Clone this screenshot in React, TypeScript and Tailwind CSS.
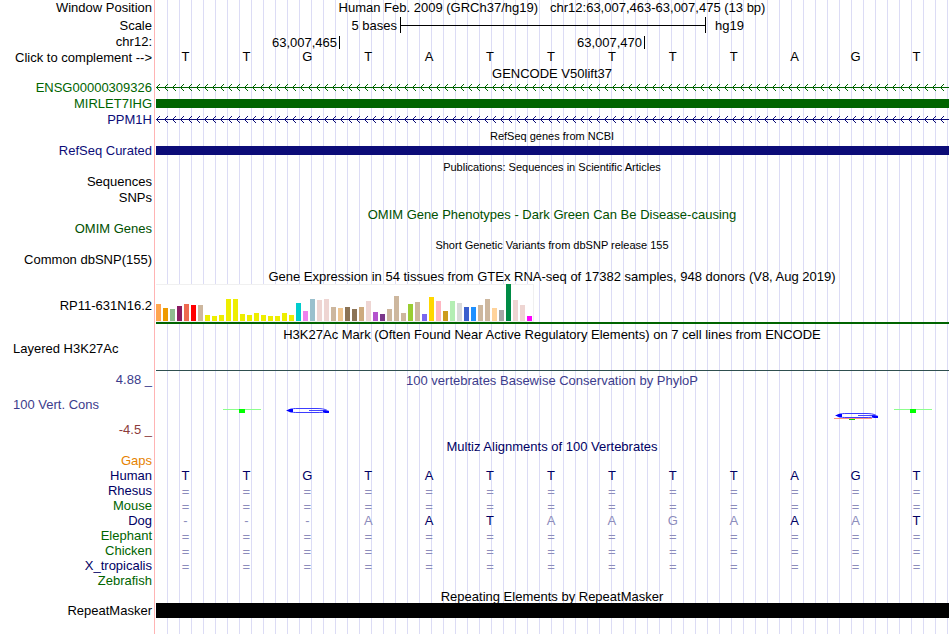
import React from "react";

const NAVY = "#0c0c78";

interface RowProps {
  label?: React.ReactNode;
  labelClass?: string;
  height?: string;
  children?: React.ReactNode;
}

const Row: React.FC<RowProps> = ({
  label,
  labelClass = "justify-end items-center pb-px",
  height = "h-4",
  children,
}) => (
  <div className={`flex ${height}`}>
    <div className={`flex w-[155px] shrink-0 pl-[13px] pr-[3px] ${labelClass}`}>
      {label}
    </div>
    <div className="min-w-0 flex-1">{children}</div>
  </div>
);

const Title: React.FC<{ text: string; className?: string; height?: string }> = ({
  text,
  className = "",
  height = "h-[15px] pt-[2px]",
}) => (
  <Row height={height}>
    <h2 className={`flex h-full items-center justify-center whitespace-pre ${className}`}>
      {text}
    </h2>
  </Row>
);

const Bar: React.FC<{ className: string }> = ({ className }) => (
  <div className="h-full pl-px pt-[3px]">
    <div className={`h-[9px] ${className}`} />
  </div>
);

// Intron line, arrows point to the reverse strand
const Intron: React.FC<{ id: string; color: string }> = ({ id, color }) => (
  <div className="h-full pl-px">
    <svg className="block h-4 w-full" shapeRendering="crispEdges">
      <defs>
        <pattern id={id} width="8" height="16" patternUnits="userSpaceOnUse">
          <path
            d="M0 7h8v1H0zM1 6h1v1H1zM2 5h1v1H2zM3 4h1v1H3zM1 8h1v1H1zM2 9h1v1H2zM3 10h1v1H3z"
            fill={color}
          />
        </pattern>
      </defs>
      <rect width="100%" height="16" fill={`url(#${id})`} />
    </svg>
  </div>
);

const Bases: React.FC<{ seq: string; className?: string; faded?: string }> = ({
  seq,
  className = "",
  faded = "",
}) => (
  <div className={`grid h-full grid-cols-13 items-center pr-[2px] text-center ${className}`}>
    {seq.split("").map((base, i) => (
      <span
        key={i}
        className={`${faded[i] === "x" ? "text-[#8c8cbc]" : ""} ${base === "=" ? "pt-[2px]" : ""}`}
      >
        {base}
      </span>
    ))}
  </div>
);

const tissues: [string, number][] = [
  ["#ffa54f", 17], ["#ee9a00", 13], ["#8fbc8f", 12], ["#8b1c62", 15],
  ["#ee6a50", 17], ["#ff0000", 16], ["#cdb79e", 16], ["#eeee00", 6],
  ["#eeee00", 5], ["#eeee00", 6], ["#eeee00", 22], ["#eeee00", 22],
  ["#eeee00", 7], ["#eeee00", 6], ["#eeee00", 8], ["#eeee00", 6],
  ["#eeee00", 5], ["#eeee00", 5], ["#eeee00", 8], ["#eeee00", 6],
  ["#00cdcd", 18], ["#ee82ee", 10], ["#9ac0cd", 22], ["#eed5d2", 21],
  ["#eed5d2", 22], ["#cdb79e", 14], ["#eec591", 13], ["#8b7355", 14],
  ["#8b7355", 12], ["#cdaa7d", 14], ["#eed5d2", 20], ["#b452cd", 9],
  ["#7a378b", 7], ["#cdb79e", 12], ["#cdb79e", 25], ["#cdb79e", 8],
  ["#9acd32", 17], ["#cdb79e", 19], ["#7a67ee", 7], ["#ffd700", 24],
  ["#ffb6c1", 20], ["#cd9b1d", 10], ["#b4eeb4", 20], ["#d9d9d9", 18],
  ["#3a5fcd", 14], ["#1e90ff", 14], ["#cdb79e", 16], ["#cdb79e", 22],
  ["#ffd39b", 13], ["#a6a6a6", 11], ["#008b45", 37], ["#eed5d2", 21],
  ["#eed5d2", 16], ["#ff00ff", 5],
];

const species = [
  { name: "Human", color: "text-[#000064]", seq: "TTGTATTTTTAGT", faded: "" },
  { name: "Rhesus", color: "text-[#000064]", seq: "=============", faded: "xxxxxxxxxxxxx" },
  { name: "Mouse", color: "text-[#006400]", seq: "=============", faded: "xxxxxxxxxxxxx" },
  { name: "Dog", color: "text-[#000064]", seq: "---AATAAGAAAT", faded: "xxxx..xxxx.x." },
  { name: "Elephant", color: "text-[#006400]", seq: "=============", faded: "xxxxxxxxxxxxx" },
  { name: "Chicken", color: "text-[#006400]", seq: "=============", faded: "xxxxxxxxxxxxx" },
  { name: "X_tropicalis", color: "text-[#000064]", seq: "=============", faded: "xxxxxxxxxxxxx" },
  { name: "Zebrafish", color: "text-[#006400]", seq: "", faded: "" },
];

const LogoT: React.FC = () => (
  <svg className="h-6 w-full" viewBox="0 0 61 24" shapeRendering="crispEdges">
    <path d="M7 9h38v1H7z" fill="#8cff8c" />
    <path d="M23 9h6v4h-6z" fill="#00ff00" />
  </svg>
);

const LogoG: React.FC<{ low?: boolean }> = ({ low }) => (
  <svg className="h-6 w-full" viewBox="0 0 61 24">
    <g transform={low ? "translate(0 5)" : undefined}>
      {low && <path d="M8 13.500H46" stroke="#ff9080" />}
      {low && <path d="M23 14.500H29" stroke="#00dc00" />}
      <path
        d="M50 10.300C48 9 44 8.500 40 8.500H20C15 8.500 12 9.200 11 10.500C12 12 15 12.500 20 12.500H40C44 12.500 47 12.300 50 11.500"
        fill="none"
        stroke="#3c3cff"
      />
      <path d="M32 10.500H49" stroke="#4646ff" />
      <path d="M9 10.500L13 9H16V12H13ZM46 10.500H51L52 11V13H48L46 12Z" fill="#0000ff" />
    </g>
  </svg>
);

const App: React.FC = () => {
  return (
    <main
      className="relative flex min-h-screen flex-col bg-white pr-px text-[13px] leading-none text-black"
      style={{ fontFamily: '"Liberation Sans", Arial, sans-serif' }}
    >
      {/* Guide lines behind the tracks */}
      <div className="absolute inset-y-0 left-[154px] right-px border-l border-[#ffb4b4] pl-px">
        <div className="h-full bg-[repeating-linear-gradient(to_right,transparent_0_11px,#dcdcf5_11px_12px)]" />
      </div>

      <div className="relative">
        <Row
          label="Window Position"
          labelClass="justify-end items-center pb-[2px]"
          height="h-[17px]"
        >
          <h1 className="flex h-full items-center justify-center gap-3 pb-[2px]">
            <span>Human Feb. 2009 (GRCh37/hg19)</span>
            <span>chr12:63,007,463-63,007,475 (13 bp)</span>
          </h1>
        </Row>
        <Row
          label="Scale"
          labelClass="justify-end items-center"
          height="h-[17px]"
        >
          <div className="grid h-full grid-cols-13 items-center pb-px pl-px">
            <span className="col-span-4 pr-[3px] text-right">5 bases</span>
            <div className="col-span-5 -mr-px flex h-4 items-center border-x border-black">
              <div className="h-px w-full bg-black" />
            </div>
            <span className="col-span-4 pl-[10px]">hg19</span>
          </div>
        </Row>
        <Row label="chr12:">
          <div className="grid h-full grid-cols-13 items-center pl-px text-right">
            <span className="col-span-3 -mr-px border-r border-black pr-[2px]">63,007,465</span>
            <span className="col-span-5 -mr-px border-r border-black pr-[2px]">63,007,470</span>
          </div>
        </Row>
        <Row
          height="h-[15px]"
          label={
            <button type="button" className="whitespace-nowrap">
              Click to complement --&gt;
            </button>
          }
        >
          <Bases seq="TTGTATTTTTAGT" className="pb-[2px]" />
        </Row>

        <Title text="GENCODE V50lift37" />
        <Row label={<span className="text-[#006400]">ENSG00000309326</span>}>
          <Intron id="intron-green" color="#006400" />
        </Row>
        <Row label={<span className="text-[#006400]">MIRLET7IHG</span>}>
          <Bar className="bg-[#006400]" />
        </Row>
        <Row label={<span className="text-[#0c0c78]">PPM1H</span>}>
          <Intron id="intron-blue" color={NAVY} />
        </Row>

        <Title text="RefSeq genes from NCBI" className="text-[11px]" />
        <Row label={<span className="text-[#0c0c78]">RefSeq Curated</span>}>
          <Bar className="bg-[#0c0c78]" />
        </Row>

        <Title text="Publications: Sequences in Scientific Articles" className="text-[11px]" />
        <Row label="Sequences" />
        <Row label="SNPs" />

        <Title
          text="OMIM Gene Phenotypes - Dark Green Can Be Disease-causing"
          className="text-[#005000]"
        />
        <Row label={<span className="text-[#005000]">OMIM Genes</span>} />

        <Title text="Short Genetic Variants from dbSNP release 155" className="text-[11px]" />
        <Row label="Common dbSNP(155)" />

        <Title
          text="Gene Expression in 54 tissues from GTEx RNA-seq of 17382 samples, 948 donors (V8, Aug 2019)"
          height="h-4"
        />
        <Row
          label="RP11-631N16.2"
          labelClass="justify-end items-center"
          height="h-[42px]"
        >
          <div className="pl-px">
            <div className="flex h-[38px] w-[378px] items-end gap-[2px] border border-l-0 border-[#f0f0f0] bg-white">
              {tissues.map(([color, size], i) => (
                <div
                  key={i}
                  className="w-[5px] shrink-0"
                  style={{ backgroundColor: color, height: size }}
                />
              ))}
            </div>
            <div className="h-[2px] bg-[#006400]" />
          </div>
        </Row>

        <Title
          text="H3K27Ac Mark (Often Found Near Active Regulatory Elements) on 7 cell lines from ENCODE"
          height="h-4"
        />
        <Row label="Layered H3K27Ac" labelClass="items-start" height="h-[30px]">
          <div className="flex h-full items-end pb-px pl-px">
            <div className="h-px w-full bg-[#2f4f4f]" />
          </div>
        </Row>

        <Row label={<span className="text-[#3c3c8c]">4.88 _</span>}>
          <h2 className="flex h-full items-center justify-center text-[#3c3c8c]">
            100 vertebrates Basewise Conservation by PhyloP
          </h2>
        </Row>
        <Row
          height="h-[50px]"
          labelClass="flex-col justify-between pt-[10px]"
          label={
            <>
              <span className="text-[#3c3c8c]">100 Vert. Cons</span>
              <span className="self-end pb-[2px] text-[#8c3c3c]">-4.5 _</span>
            </>
          }
        >
          <div className="grid grid-cols-13 pr-px pt-3">
            <span />
            <LogoT />
            <LogoG />
            <div className="col-span-8" />
            <LogoG low />
            <LogoT />
          </div>
        </Row>

        <Title text="Multiz Alignments of 100 Vertebrates" className="text-[#000064]" />
        <Row
          label={<span className="text-[#e68200]">Gaps</span>}
          labelClass="justify-end items-center"
          height="h-[15px]"
        />
        {species.map((s) => (
          <Row
            key={s.name}
            height="h-[15px]"
            labelClass="justify-end items-center"
            label={<span className={s.color}>{s.name}</span>}
          >
            <Bases seq={s.seq} faded={s.faded} className="text-[#000064]" />
          </Row>
        ))}

        <Title text="Repeating Elements by RepeatMasker" />
        <Row
          label="RepeatMasker"
          labelClass="justify-end items-center"
          height="h-[15px]"
        >
          <div className="h-full pl-px">
            <div className="h-full bg-black" />
          </div>
        </Row>
      </div>
    </main>
  );
};

export default App;
